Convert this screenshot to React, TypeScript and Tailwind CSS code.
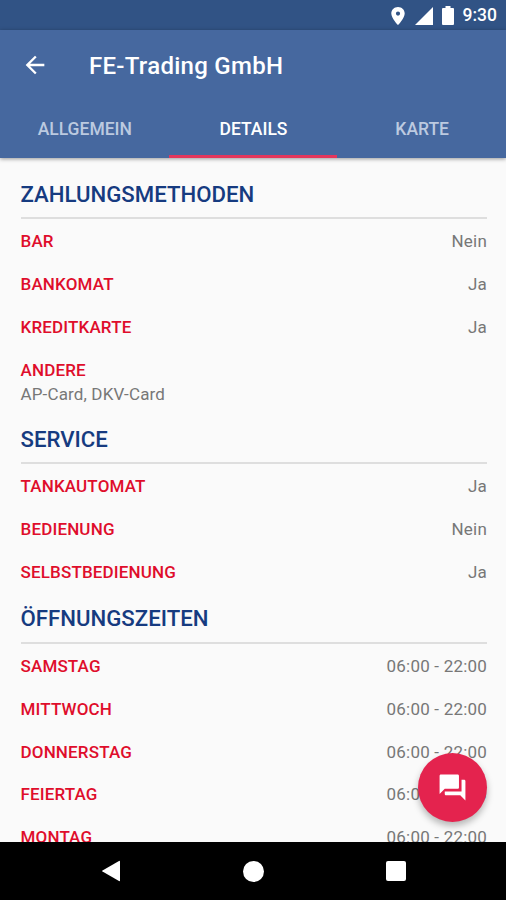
import { MdArrowBack, MdForum } from "react-icons/md";
import clsx from "clsx";

type Row = { label: string; value?: string; note?: string };

const tabs = ["Allgemein", "Details", "Karte"];

const sections: { title: string; rows: Row[] }[] = [
  {
    title: "Zahlungsmethoden",
    rows: [
      { label: "Bar", value: "Nein" },
      { label: "Bankomat", value: "Ja" },
      { label: "Kreditkarte", value: "Ja" },
      { label: "Andere", note: "AP-Card, DKV-Card" },
    ],
  },
  {
    title: "Service",
    rows: [
      { label: "Tankautomat", value: "Ja" },
      { label: "Bedienung", value: "Nein" },
      { label: "Selbstbedienung", value: "Ja" },
    ],
  },
  {
    title: "Öffnungszeiten",
    rows: [
      { label: "Samstag", value: "06:00 - 22:00" },
      { label: "Mittwoch", value: "06:00 - 22:00" },
      { label: "Donnerstag", value: "06:00 - 22:00" },
      { label: "Feiertag", value: "06:00 - 22:00" },
      { label: "Montag", value: "06:00 - 22:00" },
    ],
  },
];

export default function App() {
  return (
    <div className="relative flex h-[900px] w-[506px] flex-col overflow-hidden bg-[#fafafa] font-[Roboto,sans-serif]">
      <StatusBar />
      <header className="relative z-10 flex h-[128px] shrink-0 flex-col bg-[#46689f] shadow-[0_1px_4px_rgba(0,0,0,0.4)]">
        <div className="flex h-[70px] items-center pl-[21px] text-white">
          <MdArrowBack className="size-7" />
          <h1 className="ml-10 pt-px text-2xl font-medium leading-7 tracking-[0.28px]">FE-Trading GmbH</h1>
        </div>
        <nav className="grid flex-1 grid-cols-3">
          {tabs.map((tab) => (
            <button
              key={tab}
              className={clsx(
                "border-b-[3px] pt-1 pl-px text-[17.5px] font-medium uppercase",
                tab === "Details" ? "border-[#e4365c] text-white" : "border-transparent text-[#bccae0]",
              )}
            >
              {tab}
            </button>
          ))}
        </nav>
      </header>

      <main className="min-h-0 flex-1 overflow-hidden pt-[11.5px] pr-[19px] pl-[20.5px]">
        {sections.map((s) => (
          <Section key={s.title} title={s.title} rows={s.rows} />
        ))}
      </main>

      <button className="absolute top-[753px] left-[418px] flex size-[69px] items-center justify-center rounded-full bg-[#e4234e] text-white shadow-[0_4px_7px_rgba(0,0,0,0.28)]">
        <MdForum className="size-[31px]" />
      </button>
      <NavigationBar />
    </div>
  );
}

function StatusBar() {
  return (
    <div className="flex h-[30px] shrink-0 items-center justify-end bg-[#315385] pt-px pr-[9px] text-white">
      <svg viewBox="0 0 14 18" className="h-[18px] w-[14px]" fill="currentColor">
        <path
          fillRule="evenodd"
          d="M7 0C3.200 0 .3 2.900.3 6.500.3 11.300 7 18 7 18s6.700-6.700 6.700-11.500C13.700 2.900 10.800 0 7 0zm0 4.500a2.100 2.100 0 1 1 0 4.200 2.100 2.100 0 0 1 0-4.200z"
        />
      </svg>
      <svg viewBox="0 0 18 18" className="ml-[10px] size-[18px]" fill="currentColor">
        <path d="M18 0v18H0z" />
      </svg>
      <svg viewBox="0 0 12 19" className="ml-[9px] h-[19px] w-3" fill="currentColor">
        <path d="M3.5 0h5v2H11q1 0 1 1v15q0 1-1 1H1q-1 0-1-1V3q0-1 1-1h2.500z" />
      </svg>
      <span className="ml-[9px] text-[17.5px] font-medium">9:30</span>
    </div>
  );
}

function Section({ title, rows }: { title: string; rows: Row[] }) {
  return (
    <section>
      <h2 className="mb-[1.5px] flex h-[49.3px] items-center border-b-2 border-[#dedede] pt-[2px] text-[22.2px] font-medium uppercase text-[#163b80]">
        {title}
      </h2>
      {rows.map((row) => (
        <div key={row.label}>
          <div className="flex h-[42.9px] items-center justify-between text-[17px]">
            <span className="font-medium uppercase tracking-[0.16px] text-[#df0d2b]">{row.label}</span>
            <span className="tracking-[0.2px] text-[#777]">{row.value}</span>
          </div>
          {row.note && (
            <p className="-mt-[10px] h-[33px] text-[17px] leading-6 tracking-[0.14px] text-[#777]">{row.note}</p>
          )}
        </div>
      ))}
    </section>
  );
}

function NavigationBar() {
  return (
    <div className="flex h-[58px] shrink-0 items-center justify-between bg-black pr-[100px] pl-[101px] text-white">
      <svg viewBox="0 0 20 22" className="h-[22px] w-5" fill="currentColor">
        <path d="M18 1q1-.5 1 .5v19q0 1-1 .5L1.500 11.600q-1-.6 0-1.200z" />
      </svg>
      <span className="size-[21px] rounded-full bg-white" />
      <span className="size-5 rounded-[2px] bg-white" />
    </div>
  );
}
